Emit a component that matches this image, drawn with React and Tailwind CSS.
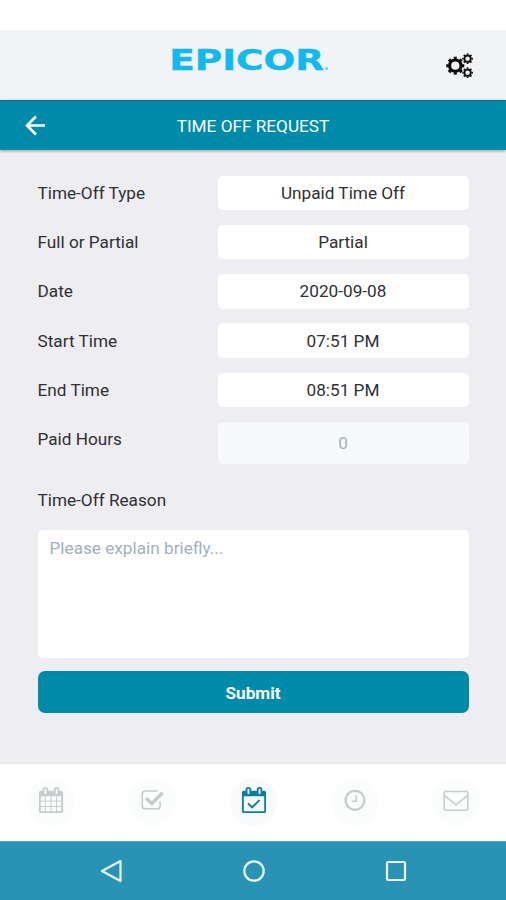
import React from "react";

const fields = [
  { label: "Time-Off Type", value: "Unpaid Time Off" },
  { label: "Full or Partial", value: "Partial" },
  { label: "Date", value: "2020-09-08" },
  { label: "Start Time", value: "07:51 PM" },
  { label: "End Time", value: "08:51 PM" },
];

const calendarFrame =
  "M1728 384v1280q0 52-38 90t-90 38h-1408q-52 0-90-38t-38-90v-1280q0-52 38-90t90-38h128v-96q0-66 47-113t113-47h64q66 0 113 47t47 113v96h384v-96q0-66 47-113t113-47h64q66 0 113 47t47 113v96h128q52 0 90 38t38 90z";
const calendarRings =
  "M576 448v-288q0-14-9-23t-23-9h-64q-14 0-23 9t-9 23v288q0 14 9 23t23 9h64q14 0 23-9t9-23zM1344 448v-288q0-14-9-23t-23-9h-64q-14 0-23 9t-9 23v288q0 14 9 23t23 9h64q14 0 23-9t9-23z";
const calendarGrid =
  "M192 1664h288v-288h-288zM544 1664h320v-288h-320zM928 1664h320v-288h-320zM1312 1664h288v-288h-288zM192 1312h288v-320h-288zM544 1312h320v-320h-320zM928 1312h320v-320h-320zM1312 1312h288v-320h-288zM192 928h288v-288h-288zM544 928h320v-288h-320zM928 928h320v-288h-320zM1312 928h288v-288h-288z";

const CalendarIcon = () => (
  <svg className="h-[26px] w-[26px]" viewBox="0 0 1792 1792" fill="currentColor">
    <path fillRule="evenodd" d={calendarFrame + calendarRings + calendarGrid} />
  </svg>
);

const CheckIcon = () => (
  <svg className="h-[26px] w-[26px]" viewBox="0 0 26 26" fill="none" stroke="currentColor">
    <path
      d="M18.500 4H6.200a2.900 2.900 0 0 0-2.900 2.900v12a2.900 2.900 0 0 0 2.900 2.900h12a2.900 2.900 0 0 0 2.900-2.900v-4.500"
      strokeWidth="1.6"
    />
    <path d="M7.200 11.200l5.600 5.400 10.700-10.900" strokeWidth="3.4" />
  </svg>
);

const TimeOffIcon = () => (
  <svg className="h-[26px] w-[26px]" viewBox="0 0 1792 1792" fill="currentColor">
    <path
      fillRule="evenodd"
      d={
        calendarFrame +
        calendarRings +
        "M192 1664h1408v-1024h-1408zM1303 964l-512 512q-10 9-23 9t-23-9l-288-288q-9-10-9-23t9-22l46-46q9-9 22-9t23 9l220 220 444-444q10-9 23-9t22 9l46 46q9 9 9 22t-9 23z"
      }
    />
  </svg>
);

const ClockIcon = () => (
  <svg className="h-[26px] w-[26px]" viewBox="0 0 26 26" fill="none" stroke="currentColor">
    <circle cx="13" cy="13.300" r="9.500" strokeWidth="2.200" />
    <path d="M14.200 8.300v6H9.800" strokeWidth="1.5" />
  </svg>
);

const MailIcon = () => (
  <svg className="h-[26px] w-[26px]" viewBox="0 0 26 26" fill="none" stroke="currentColor" strokeWidth="1.5">
    <rect x="1.2" y="4.6" width="23.6" height="18.6" rx="1" />
    <path d="M1.5 8.6L13 17.9l11.5-9.3" />
  </svg>
);

const tabs = [
  { name: "calendar", Icon: CalendarIcon },
  { name: "approvals", Icon: CheckIcon },
  { name: "timeOff", Icon: TimeOffIcon, active: true },
  { name: "clock", Icon: ClockIcon },
  { name: "messages", Icon: MailIcon },
];

const Gear = ({ cx, cy, r, width }) => (
  <g fill="none" stroke="currentColor">
    <circle cx={cx} cy={cy} r={r} strokeWidth={width} />
    <circle
      cx={cx}
      cy={cy}
      r={r + width / 2 + 0.5}
      strokeWidth={width * 0.75}
      pathLength="16"
      strokeDasharray="1 1"
      strokeDashoffset="0.5"
    />
  </g>
);

const Header = () => (
  <header className="flex h-[70px] items-start justify-between bg-[#f1f3f5] pr-8 pl-[168px]">
    <svg className="mt-3 h-9 w-[164px]" viewBox="0 0 164 36">
      <text
        x="1.2"
        y="27.8"
        textLength="155"
        lengthAdjust="spacingAndGlyphs"
        className="fill-[#10b9ee] stroke-[#10b9ee] font-['DejaVu_Sans'] text-[28px] font-bold"
        strokeWidth="0.4"
      >
        EPICOR
      </text>
      <circle cx="158.7" cy="26.5" r="1.6" className="fill-[#6dcdf0]" />
    </svg>
    <svg className="mt-5 h-8 w-8 text-[#0c0c0c]" viewBox="442 50 32 32">
      <Gear cx={455.3} cy={65.7} r={5.7} width={3.2} />
      <Gear cx={467.6} cy={58.7} r={3.2} width={1.9} />
      <Gear cx={467.6} cy={72.7} r={3.2} width={1.9} />
    </svg>
  </header>
);

const TitleBar = () => (
  <div className="relative flex h-[50px] items-center border-t border-[#0b6f88] bg-[#008bab] text-white shadow-[0_1px_3px_rgba(0,0,0,0.35)]">
    <svg className="ml-6 h-6 w-6" viewBox="0 0 24 24" fill="none" stroke="currentColor" strokeWidth="2.6">
      <path d="M21 11.5H3M12 2.5l-9 9 9 9" />
    </svg>
    <h1 className="mr-12 flex-1 text-center text-[17.2px]">
      TIME OFF REQUEST
    </h1>
  </div>
);

const RequestForm = () => (
  <main className="h-[613px] bg-[#eeedf2] px-[37.5px] pt-[25.5px] text-[#303034]">
    <div className="flex flex-col gap-[14.8px]">
      {fields.map((field) => (
        <div key={field.label} className="flex h-[34.5px] items-center justify-between">
          <label>{field.label}</label>
          <div className="flex h-full w-[251px] items-center justify-center rounded-[5px] bg-white">
            {field.value}
          </div>
        </div>
      ))}
      <div className="flex h-[42px] justify-between">
        <label className="mt-[5.500px]">Paid Hours</label>
        <div className="flex h-full w-[251px] items-center justify-center rounded-[5px] bg-[#f7fafc] pt-px text-[#a3aebf]">
          0
        </div>
      </div>
    </div>
    <label className="mt-6 block">Time-Off Reason</label>
    <div className="mt-[18px] h-32 rounded-[5px] bg-white px-3 pt-1.5 text-[#a3afbf]">
      Please explain briefly...
    </div>
    <button className="mt-[13px] h-[42px] w-full rounded-[7px] bg-[#008bab] pt-0.5 font-bold text-white">
      Submit
    </button>
  </main>
);

const TabBar = () => (
  <nav className="flex h-[78px] items-start justify-between border-t border-[#e8e8eb] bg-white pt-[14px] pr-[26px] pl-[27px]">
    {tabs.map(({ name, Icon, active }) => (
      <div
        key={name}
        className={`flex h-12 w-12 items-center justify-center rounded-full pb-1 ${
          active ? "bg-[#f8fafc] text-[#087f9f]" : "bg-[#fbfcfc] text-[#c6cbcd]"
        }`}
      >
        <Icon />
      </div>
    ))}
  </nav>
);

const SystemBar = () => (
  <footer className="flex h-[59px] items-center justify-between border-t border-[#58a9c3] bg-[#2993b6] pr-[98px] pl-[99px] text-[#eaf8fc]">
    <svg className="h-6 w-6" viewBox="0 0 24 24" fill="none" stroke="currentColor" strokeWidth="2.2" strokeLinejoin="round">
      <path d="M21.5 2L3 12l18.500 10z" />
    </svg>
    <svg className="h-6 w-6" viewBox="0 0 24 24" fill="none" stroke="currentColor" strokeWidth="2.2">
      <circle cx="12" cy="12" r="9.700" />
    </svg>
    <svg className="h-6 w-6" viewBox="0 0 24 24" fill="none" stroke="currentColor" strokeWidth="2.2">
      <rect x="3" y="3" width="18" height="18" rx="1" />
    </svg>
  </footer>
);

const App = () => {
  return (
    <div className="h-[900px] w-[506px] overflow-hidden bg-white pt-[30px] font-['Roboto',sans-serif] text-[17.2px] leading-6">
      <Header />
      <TitleBar />
      <RequestForm />
      <TabBar />
      <SystemBar />
    </div>
  );
};

export default App;
